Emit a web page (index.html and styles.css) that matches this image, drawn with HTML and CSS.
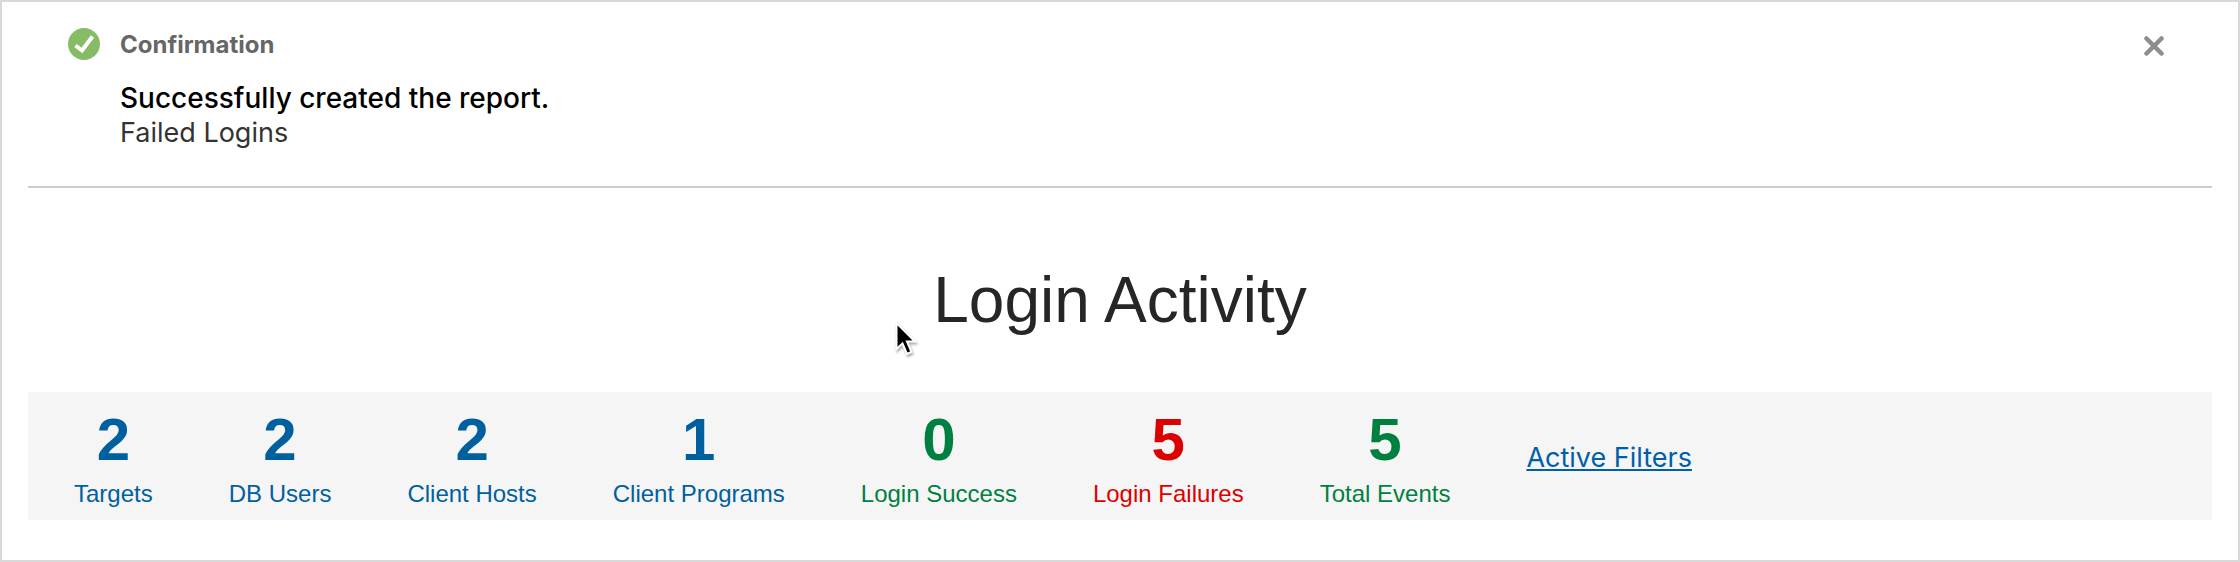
FILE: index.html
```html
<!DOCTYPE html>
<html lang="en">
<head>
<meta charset="utf-8">
<meta name="viewport" content="width=device-width, initial-scale=1">
<title>Login Activity</title>
<link rel="stylesheet" href="styles.css">
</head>
<body>
<main class="page">
  <section class="notice" role="status">
    <svg class="notice-icon" viewBox="0 0 32 32" aria-hidden="true">
      <circle cx="16" cy="16" r="16" fill="#86bc66"/>
      <path d="M7.5 17.500 L14 22.500 L24.500 8.500" fill="none" stroke="#fff" stroke-width="4"/>
    </svg>
    <div class="notice-body">
      <h2 class="notice-title">Confirmation</h2>
      <p class="notice-message">Successfully created the report.</p>
      <p class="notice-detail">Failed Logins</p>
    </div>
    <button class="close" type="button" aria-label="Close">
      <svg class="close-icon" viewBox="0 0 20 20" aria-hidden="true">
        <path d="M2.500 2.500 L17.500 17.500 M17.500 2.500 L2.500 17.500" stroke="#8b8d8f" stroke-width="4.500" stroke-linecap="round"/>
      </svg>
    </button>
  </section>
  <h1 class="title">Login Activity</h1>
  <section class="summary" aria-label="Login summary">
    <div class="stat"><span class="value">2</span><span class="label">Targets</span></div>
    <div class="stat"><span class="value">2</span><span class="label">DB Users</span></div>
    <div class="stat"><span class="value">2</span><span class="label">Client Hosts</span></div>
    <div class="stat"><span class="value">1</span><span class="label">Client Programs</span></div>
    <div class="stat good"><span class="value">0</span><span class="label">Login Success</span></div>
    <div class="stat bad"><span class="value">5</span><span class="label">Login Failures</span></div>
    <div class="stat good"><span class="value">5</span><span class="label">Total Events</span></div>
    <a class="filters" href="#filters">Active Filters</a>
  </section>
  <svg class="pointer" viewBox="0 0 28 40" aria-hidden="true">
    <path d="M3.500 3 L3.500 29 L9.500 23.500 L14 34 L18.500 32 L14 21.500 L22 21.500 Z" fill="#000" stroke="#fff" stroke-width="2"/>
  </svg>
</main>
</body>
</html>
```
FILE: styles.css
```css
* {
  box-sizing: border-box;
}

body {
  margin: 0;
  background: #fff;
  font-family: Inter, "Liberation Sans", sans-serif;
}

h1, h2, p {
  margin: 0;
}

.page {
  position: relative;
  min-height: 100vh;
  padding: 0 26px;
  border: 2px solid #d9d9d9;
}

.notice {
  display: flex;
  align-items: flex-start;
  padding: 26px 48px 36px 40px;
  border-bottom: 2px solid #ccc;
}

.notice-icon {
  width: 32px;
  height: 32px;
  margin-right: 20px;
}

.notice-body {
  flex: 1;
}

.notice-title {
  margin-bottom: 18px;
  color: #666;
  font-size: 24px;
  font-weight: 700;
  line-height: 34px;
}

.notice-message {
  color: #000;
  font-size: 28px;
  font-weight: 500;
  line-height: 36px;
}

.notice-detail {
  color: #333;
  font-size: 27px;
  line-height: 34px;
}

.close {
  display: flex;
  margin-top: 8px;
  padding: 0;
  border: 0;
  background: none;
}

.close-icon {
  width: 20px;
  height: 20px;
}

.title {
  padding: 72px 0 52px;
  color: #262626;
  font-family: "Liberation Sans", Arial, sans-serif;
  font-size: 64px;
  font-weight: 400;
  line-height: 80px;
  text-align: center;
}

.summary {
  display: flex;
  flex-wrap: wrap;
  align-items: center;
  gap: 0 76px;
  padding: 12px 46px 8px;
  background: #f5f5f5;
}

.stat {
  display: flex;
  flex-direction: column;
  align-items: center;
  color: #00609f;
  font-family: "Liberation Sans", Arial, sans-serif;
}

.good {
  color: #008040;
}

.bad {
  color: #dc0000;
}

.value {
  font-size: 60px;
  font-weight: bold;
  line-height: 72px;
}

.label {
  font-size: 24px;
  line-height: 36px;
}

.filters {
  color: #005eab;
  font-size: 27px;
  line-height: 36px;
}

.pointer {
  position: absolute;
  top: 318px;
  left: 891px;
  width: 28px;
  height: 40px;
  filter: drop-shadow(1px 2px 1px #0005);
}
```
